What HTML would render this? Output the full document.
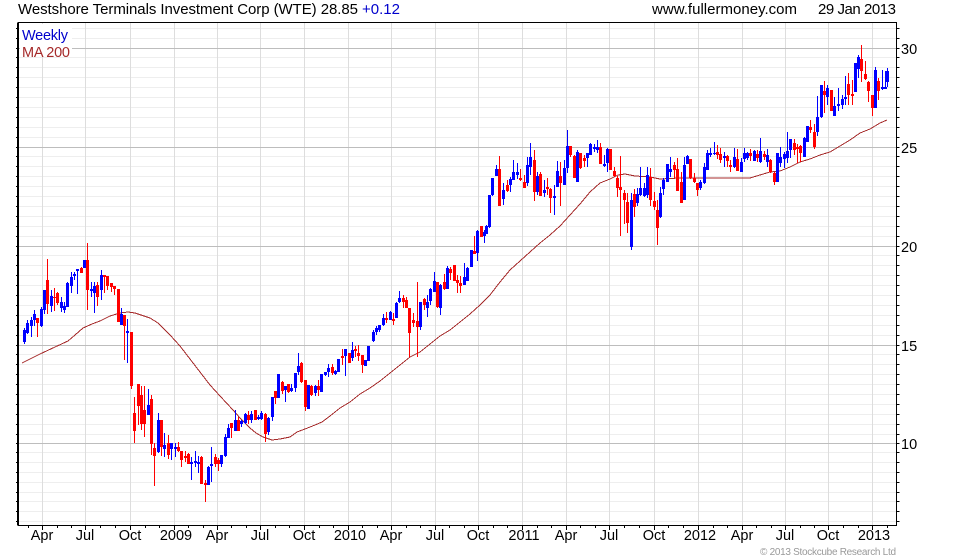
<!DOCTYPE html>
<html>
<head>
<meta charset="utf-8">
<title>WTE Weekly</title>
<style>
html,body{margin:0;padding:0;background:#fff}
svg{display:block}
text{font-family:"Liberation Sans",Arial,sans-serif;font-size:14.5px;fill:#000}
.r{fill:#f00;shape-rendering:crispEdges}
.b{fill:#00f;shape-rendering:crispEdges}
.c{shape-rendering:crispEdges;fill:none}
</style>
</head>
<body>
<svg width="980" height="560" viewBox="0 0 980 560" xmlns="http://www.w3.org/2000/svg">
<defs>
<path id="k" d="M0 28.5h2.5M0 38.5h2.5M0 48.5h2.5M0 57.5h2.5M0 67.5h2.5M0 77.5h2.5M0 87.5h2.5M0 97.5h2.5M0 107.5h2.5M0 117.5h2.5M0 127.5h2.5M0 137.5h2.5M0 147.5h2.5M0 156.5h2.5M0 166.5h2.5M0 176.5h2.5M0 186.5h2.5M0 196.5h2.5M0 206.5h2.5M0 216.5h2.5M0 226.5h2.5M0 236.5h2.5M0 246.5h2.5M0 255.5h2.5M0 265.5h2.5M0 275.5h2.5M0 285.5h2.5M0 295.5h2.5M0 305.5h2.5M0 315.5h2.5M0 325.5h2.5M0 335.5h2.5M0 345.5h2.5M0 354.5h2.5M0 364.5h2.5M0 374.5h2.5M0 384.5h2.5M0 394.5h2.5M0 404.5h2.5M0 414.5h2.5M0 424.5h2.5M0 434.5h2.5M0 443.5h2.5M0 452.5h2.5M0 462.5h2.5M0 472.5h2.5M0 482.5h2.5M0 492.5h2.5M0 501.5h2.5M0 511.5h2.5M0 521.5h2.5" stroke="#000" class="c"/>
</defs>
<!-- minor horizontal grid -->
<path class="c" stroke="#eeeeee" d="M19 28.5H896M19 38.5H896M19 57.5H896M19 67.5H896M19 77.5H896M19 87.5H896M19 97.5H896M19 107.5H896M19 117.5H896M19 127.5H896M19 137.5H896M19 156.5H896M19 166.5H896M19 176.5H896M19 186.5H896M19 196.5H896M19 206.5H896M19 216.5H896M19 226.5H896M19 236.5H896M19 255.5H896M19 265.5H896M19 275.5H896M19 285.5H896M19 295.5H896M19 305.5H896M19 315.5H896M19 325.5H896M19 335.5H896M19 354.5H896M19 364.5H896M19 374.5H896M19 384.5H896M19 394.5H896M19 404.5H896M19 414.5H896M19 424.5H896M19 434.5H896M19 452.5H896M19 462.5H896M19 472.5H896M19 482.5H896M19 492.5H896M19 501.5H896M19 511.5H896M19 521.5H896"/>
<!-- vertical grid -->
<path class="c" stroke="#dddddd" d="M42.5 23V525M85.5 23V525M130.5 23V525M174.5 23V525M217.5 23V525M260.5 23V525M304.5 23V525M348.5 23V525M391.5 23V525M435.5 23V525M478.5 23V525M522.5 23V525M566.5 23V525M609.5 23V525M654.5 23V525M698.5 23V525M742.5 23V525M785.5 23V525M828.5 23V525M872.5 23V525"/>
<!-- major horizontal grid -->
<path class="c" stroke="#bdbdbd" d="M19 48.5H896M19 147.5H896M19 246.5H896M19 345.5H896M19 443.5H896"/>
<!-- legend background -->
<rect x="20" y="24" width="52" height="33" fill="#fff"/>
<!-- moving average -->
<polyline class="c" stroke="#a52a2a" points="22,363 30,359 40,354 55,347 68,341 75,335 83,328 92,324 100,321 110,316 120,313 128,312 135,313 150,318 158,323 165,330 170,335 180,346 190,359 200,372 210,385 220,396 233,410 240,418 250,428 256,433 263,437 272,440 280,439 290,437 297,432 305,429 315,425 322,422 330,416 340,408 350,402 360,394 370,388 380,381 390,373 400,365 410,357 420,352 430,344 440,336 450,330 460,322 470,314 480,305 490,295 500,282 510,270 520,261 530,252 540,243 550,235 560,226 570,215 580,204 590,192 600,183 610,179 618,175 625,174 635,176 650,177 660,179 680,178 700,178 720,178 740,178 750,178 760,175 770,172 780,171 790,167 800,162 810,159 820,155 830,152 840,146 850,140 860,133 870,129 880,123 887,120"/>
<!-- candles -->
<path class="b" d="M23 330h3V342h-3zM24 328h1V344h-1zM26 323h3V333h-3zM27 320h1V334h-1zM30 320h3V326h-3zM31 317h1V337h-1zM33 314h3V320h-3zM34 310h1V326h-1z"/>
<path class="r" d="M36 318h3V323h-3zM37 318h1V337h-1z"/>
<path class="b" d="M40 309h3V326h-3zM41 307h1V327h-1zM43 290h3V310h-3zM44 290h1V314h-1z"/>
<path class="r" d="M46 280h3V304h-3zM47 259h1V314h-1z"/>
<path class="b" d="M50 296h3V306h-3zM51 290h1V312h-1z"/>
<path class="r" d="M53 297h3V298h-3zM54 288h1V311h-1zM56 293h3V303h-3zM57 292h1V305h-1z"/>
<path class="b" d="M60 302h3V308h-3zM61 297h1V312h-1zM63 306h3V310h-3zM64 302h1V313h-1zM66 283h3V307h-3zM67 282h1V307h-1zM70 277h3V286h-3zM71 272h1V293h-1zM73 274h3V276h-3zM74 272h1V280h-1zM76 269h3V271h-3zM77 269h1V294h-1z"/>
<path class="r" d="M80 268h3V273h-3zM81 267h1V273h-1z"/>
<path class="b" d="M83 260h3V268h-3zM84 260h1V268h-1z"/>
<path class="r" d="M86 260h3V290h-3zM87 243h1V310h-1z"/>
<path class="b" d="M90 289h3V291h-3zM91 282h1V297h-1zM93 286h3V293h-3zM94 282h1V313h-1z"/>
<path class="r" d="M96 285h3V297h-3zM97 282h1V306h-1z"/>
<path class="b" d="M100 275h3V290h-3zM101 270h1V300h-1z"/>
<path class="r" d="M103 275h3V277h-3zM104 275h1V293h-1zM106 276h3V286h-3zM107 276h1V290h-1zM110 283h3V287h-3zM111 283h1V292h-1zM113 286h3V289h-3zM114 286h1V295h-1zM117 289h3V322h-3zM118 289h1V322h-1z"/>
<path class="b" d="M120 314h3V325h-3zM121 308h1V325h-1z"/>
<path class="r" d="M123 315h3V326h-3zM124 315h1V360h-1z"/>
<path class="b" d="M126 331h3V333h-3zM127 319h1V363h-1z"/>
<path class="r" d="M130 332h3V386h-3zM131 332h1V389h-1zM133 413h3V431h-3zM134 397h1V443h-1zM137 384h3V406h-3zM138 384h1V425h-1zM140 395h3V424h-3zM141 386h1V430h-1zM143 410h3V424h-3zM144 386h1V437h-1z"/>
<path class="b" d="M147 405h3V415h-3zM148 389h1V415h-1z"/>
<path class="r" d="M150 399h3V444h-3zM151 395h1V455h-1zM153 448h3V456h-3zM154 443h1V486h-1z"/>
<path class="b" d="M157 420h3V452h-3zM158 413h1V453h-1z"/>
<path class="r" d="M160 420h3V447h-3zM161 420h1V456h-1z"/>
<path class="b" d="M163 445h3V449h-3zM164 433h1V457h-1z"/>
<path class="r" d="M167 443h3V455h-3zM168 435h1V459h-1z"/>
<path class="b" d="M170 443h3V449h-3zM171 443h1V460h-1zM174 447h3V449h-3zM175 443h1V457h-1z"/>
<path class="r" d="M177 447h3V451h-3zM178 442h1V452h-1zM180 451h3V460h-3zM181 451h1V467h-1zM184 456h3V458h-3zM185 451h1V462h-1zM187 454h3V464h-3zM188 453h1V464h-1z"/>
<path class="b" d="M190 462h3V464h-3zM191 457h1V480h-1zM194 461h3V463h-3zM195 451h1V467h-1zM197 462h3V464h-3zM198 456h1V473h-1z"/>
<path class="r" d="M200 457h3V484h-3zM201 456h1V484h-1zM204 483h3V485h-3zM205 480h1V502h-1z"/>
<path class="b" d="M207 467h3V485h-3zM208 466h1V485h-1zM210 464h3V466h-3zM211 447h1V482h-1z"/>
<path class="r" d="M214 457h3V464h-3zM215 454h1V467h-1zM217 460h3V464h-3zM218 458h1V471h-1z"/>
<path class="b" d="M220 455h3V464h-3zM221 455h1V467h-1zM224 437h3V456h-3zM225 434h1V457h-1zM227 428h3V438h-3zM228 424h1V438h-1z"/>
<path class="r" d="M230 423h3V428h-3zM231 423h1V438h-1z"/>
<path class="b" d="M234 420h3V431h-3zM235 410h1V431h-1z"/>
<path class="r" d="M237 420h3V431h-3zM238 417h1V431h-1z"/>
<path class="b" d="M240 421h3V424h-3zM241 420h1V427h-1zM244 414h3V423h-3zM245 413h1V424h-1z"/>
<path class="r" d="M247 415h3V420h-3zM248 411h1V424h-1z"/>
<path class="b" d="M250 414h3V420h-3zM251 411h1V423h-1z"/>
<path class="r" d="M254 410h3V420h-3zM255 410h1V420h-1z"/>
<path class="b" d="M257 417h3V419h-3zM258 415h1V420h-1zM260 413h3V419h-3zM261 411h1V420h-1z"/>
<path class="r" d="M264 414h3V434h-3zM265 413h1V442h-1z"/>
<path class="b" d="M267 418h3V432h-3zM268 417h1V435h-1zM271 397h3V417h-3zM272 397h1V421h-1z"/>
<path class="r" d="M274 391h3V398h-3zM275 391h1V404h-1z"/>
<path class="b" d="M277 374h3V398h-3zM278 374h1V398h-1z"/>
<path class="r" d="M281 382h3V391h-3zM282 381h1V394h-1z"/>
<path class="b" d="M284 386h3V390h-3zM285 386h1V402h-1z"/>
<path class="r" d="M287 384h3V392h-3zM288 384h1V393h-1z"/>
<path class="b" d="M290 388h3V391h-3zM291 384h1V392h-1zM294 373h3V388h-3zM295 373h1V392h-1zM297 366h3V372h-3zM298 353h1V375h-1z"/>
<path class="r" d="M300 363h3V382h-3zM301 362h1V383h-1zM304 380h3V407h-3zM305 380h1V411h-1z"/>
<path class="b" d="M307 385h3V409h-3zM308 385h1V409h-1z"/>
<path class="r" d="M310 386h3V395h-3zM311 385h1V396h-1z"/>
<path class="b" d="M314 386h3V393h-3zM315 385h1V396h-1z"/>
<path class="r" d="M317 386h3V390h-3zM318 380h1V396h-1z"/>
<path class="b" d="M320 374h3V392h-3zM321 374h1V392h-1zM324 372h3V375h-3zM325 372h1V376h-1zM327 368h3V372h-3zM328 364h1V377h-1z"/>
<path class="r" d="M331 367h3V373h-3zM332 364h1V375h-1z"/>
<path class="b" d="M334 371h3V374h-3zM335 370h1V375h-1zM337 359h3V372h-3zM338 359h1V372h-1z"/>
<path class="r" d="M341 356h3V358h-3zM342 349h1V365h-1z"/>
<path class="b" d="M344 349h3V356h-3zM345 349h1V376h-1z"/>
<path class="r" d="M348 353h3V363h-3zM349 353h1V363h-1z"/>
<path class="b" d="M351 350h3V358h-3zM352 342h1V361h-1z"/>
<path class="r" d="M354 349h3V351h-3zM355 346h1V357h-1zM357 353h3V356h-3zM358 345h1V361h-1zM361 355h3V365h-3zM362 355h1V373h-1z"/>
<path class="b" d="M364 360h3V366h-3zM365 360h1V366h-1zM367 346h3V361h-3zM368 346h1V361h-1zM372 332h3V341h-3zM373 330h1V342h-1zM375 328h3V332h-3zM376 326h1V335h-1zM378 325h3V330h-3zM379 325h1V332h-1zM382 318h3V325h-3zM383 314h1V326h-1z"/>
<path class="r" d="M385 318h3V320h-3zM386 312h1V323h-1z"/>
<path class="b" d="M389 312h3V320h-3zM390 311h1V320h-1z"/>
<path class="r" d="M392 319h3V321h-3zM393 313h1V325h-1z"/>
<path class="b" d="M395 303h3V318h-3zM396 302h1V318h-1zM398 298h3V302h-3zM399 291h1V303h-1z"/>
<path class="r" d="M402 298h3V302h-3zM403 295h1V308h-1zM405 300h3V308h-3zM406 297h1V308h-1zM408 308h3V333h-3zM409 308h1V357h-1zM412 320h3V323h-3zM413 313h1V327h-1zM416 321h3V327h-3zM417 282h1V357h-1z"/>
<path class="b" d="M419 302h3V327h-3zM420 302h1V330h-1z"/>
<path class="r" d="M423 299h3V305h-3zM424 298h1V310h-1z"/>
<path class="b" d="M426 302h3V308h-3zM427 295h1V317h-1zM429 289h3V301h-3zM430 288h1V305h-1zM433 281h3V292h-3zM434 272h1V292h-1z"/>
<path class="r" d="M436 282h3V307h-3zM437 282h1V308h-1z"/>
<path class="b" d="M439 285h3V308h-3zM440 284h1V315h-1z"/>
<path class="r" d="M443 282h3V289h-3zM444 274h1V290h-1z"/>
<path class="b" d="M446 268h3V289h-3zM447 266h1V289h-1z"/>
<path class="r" d="M449 269h3V273h-3zM450 267h1V280h-1zM453 265h3V281h-3zM454 265h1V281h-1zM456 280h3V283h-3zM457 275h1V293h-1zM459 283h3V286h-3zM460 276h1V293h-1z"/>
<path class="b" d="M463 277h3V285h-3zM464 263h1V285h-1zM466 268h3V281h-3zM467 267h1V281h-1zM470 250h3V267h-3zM471 250h1V267h-1z"/>
<path class="r" d="M473 251h3V254h-3zM474 236h1V254h-1z"/>
<path class="b" d="M476 231h3V253h-3zM477 230h1V261h-1z"/>
<path class="r" d="M480 226h3V237h-3zM481 226h1V237h-1z"/>
<path class="b" d="M483 232h3V236h-3zM484 230h1V243h-1zM485 226h3V234h-3zM486 225h1V234h-1zM488 195h3V227h-3zM489 195h1V228h-1zM491 178h3V195h-3zM492 178h1V196h-1zM495 169h3V176h-3zM496 165h1V176h-1z"/>
<path class="r" d="M498 169h3V206h-3zM499 156h1V206h-1z"/>
<path class="b" d="M502 190h3V199h-3zM503 183h1V205h-1z"/>
<path class="r" d="M506 185h3V191h-3zM507 180h1V192h-1z"/>
<path class="b" d="M509 179h3V185h-3zM510 177h1V192h-1zM512 172h3V180h-3zM513 160h1V180h-1zM516 172h3V175h-3zM517 163h1V179h-1z"/>
<path class="r" d="M519 178h3V180h-3zM520 169h1V181h-1zM523 182h3V188h-3zM524 175h1V188h-1z"/>
<path class="b" d="M526 165h3V183h-3zM527 157h1V186h-1zM529 157h3V167h-3zM530 143h1V175h-1z"/>
<path class="r" d="M533 160h3V192h-3zM534 150h1V201h-1z"/>
<path class="b" d="M536 176h3V192h-3zM537 172h1V195h-1z"/>
<path class="r" d="M539 174h3V196h-3zM540 172h1V196h-1z"/>
<path class="b" d="M543 190h3V193h-3zM544 180h1V197h-1z"/>
<path class="r" d="M546 187h3V189h-3zM547 178h1V195h-1zM549 189h3V198h-3zM550 188h1V213h-1z"/>
<path class="b" d="M553 196h3V198h-3zM554 185h1V215h-1zM556 171h3V187h-3zM557 161h1V187h-1z"/>
<path class="r" d="M559 176h3V183h-3zM560 162h1V206h-1z"/>
<path class="b" d="M563 168h3V185h-3zM564 160h1V185h-1zM566 146h3V168h-3zM567 130h1V173h-1z"/>
<path class="r" d="M569 146h3V155h-3zM570 146h1V157h-1zM573 156h3V178h-3zM574 155h1V178h-1z"/>
<path class="b" d="M576 152h3V182h-3zM577 150h1V182h-1z"/>
<path class="r" d="M579 153h3V168h-3zM580 153h1V169h-1zM583 158h3V161h-3zM584 155h1V167h-1z"/>
<path class="b" d="M586 153h3V158h-3zM587 153h1V167h-1zM589 144h3V155h-3zM590 143h1V155h-1zM593 147h3V149h-3zM594 144h1V152h-1zM596 147h3V150h-3zM597 140h1V153h-1z"/>
<path class="r" d="M599 147h3V164h-3zM600 143h1V164h-1z"/>
<path class="b" d="M603 164h3V166h-3zM604 155h1V167h-1zM606 149h3V163h-3zM607 148h1V172h-1z"/>
<path class="r" d="M609 149h3V170h-3zM610 149h1V170h-1zM613 171h3V176h-3zM614 167h1V177h-1zM616 178h3V188h-3zM617 176h1V197h-1zM619 187h3V190h-3zM620 156h1V236h-1zM623 193h3V200h-3zM624 190h1V224h-1zM626 202h3V223h-3zM627 193h1V233h-1z"/>
<path class="b" d="M630 200h3V247h-3zM631 193h1V250h-1z"/>
<path class="r" d="M633 194h3V207h-3zM634 189h1V217h-1z"/>
<path class="b" d="M636 194h3V203h-3zM637 188h1V206h-1zM639 188h3V195h-3zM640 167h1V196h-1zM643 188h3V196h-3zM644 183h1V197h-1zM646 175h3V195h-3zM647 167h1V198h-1z"/>
<path class="r" d="M649 177h3V200h-3zM650 168h1V206h-1zM653 201h3V207h-3zM654 192h1V210h-1zM656 210h3V228h-3zM657 200h1V245h-1z"/>
<path class="b" d="M659 193h3V217h-3zM660 187h1V218h-1zM662 180h3V189h-3zM663 178h1V195h-1zM666 164h3V182h-3zM667 164h1V182h-1zM669 169h3V172h-3zM670 157h1V177h-1z"/>
<path class="r" d="M673 165h3V170h-3zM674 162h1V178h-1zM676 169h3V191h-3zM677 158h1V191h-1zM680 182h3V203h-3zM681 172h1V203h-1z"/>
<path class="b" d="M683 165h3V200h-3zM684 157h1V200h-1zM686 156h3V164h-3zM687 155h1V164h-1z"/>
<path class="r" d="M689 159h3V178h-3zM690 159h1V179h-1zM693 178h3V182h-3zM694 173h1V183h-1zM696 183h3V190h-3zM697 183h1V196h-1z"/>
<path class="b" d="M699 182h3V188h-3zM700 180h1V190h-1zM703 167h3V183h-3zM704 163h1V184h-1zM706 153h3V170h-3zM707 150h1V170h-1zM709 153h3V155h-3zM710 148h1V157h-1zM713 153h3V154h-3zM714 142h1V155h-1z"/>
<path class="r" d="M716 152h3V155h-3zM717 145h1V159h-1zM719 154h3V160h-3zM720 148h1V163h-1z"/>
<path class="b" d="M723 156h3V158h-3zM724 152h1V167h-1z"/>
<path class="r" d="M726 156h3V161h-3zM727 155h1V167h-1zM729 165h3V167h-3zM730 160h1V172h-1z"/>
<path class="b" d="M733 157h3V167h-3zM734 148h1V168h-1z"/>
<path class="r" d="M736 159h3V171h-3zM737 149h1V171h-1z"/>
<path class="b" d="M740 162h3V172h-3zM741 158h1V172h-1zM743 153h3V159h-3zM744 148h1V162h-1zM746 153h3V158h-3zM747 152h1V160h-1z"/>
<path class="r" d="M749 153h3V156h-3zM750 149h1V161h-1z"/>
<path class="b" d="M753 151h3V161h-3zM754 150h1V161h-1z"/>
<path class="r" d="M756 154h3V158h-3zM757 150h1V162h-1z"/>
<path class="b" d="M759 151h3V162h-3zM760 138h1V163h-1z"/>
<path class="r" d="M763 154h3V157h-3zM764 151h1V160h-1z"/>
<path class="b" d="M766 155h3V162h-3zM767 149h1V167h-1z"/>
<path class="r" d="M769 160h3V172h-3zM770 159h1V173h-1zM773 173h3V182h-3zM774 172h1V185h-1z"/>
<path class="b" d="M776 153h3V182h-3zM777 153h1V182h-1zM779 157h3V163h-3zM780 147h1V167h-1zM783 154h3V159h-3zM784 152h1V168h-1zM786 151h3V158h-3zM787 132h1V163h-1zM789 139h3V150h-3zM790 139h1V158h-1z"/>
<path class="r" d="M793 143h3V150h-3zM794 139h1V155h-1zM796 147h3V149h-3zM797 144h1V163h-1zM799 146h3V153h-3zM800 145h1V162h-1z"/>
<path class="b" d="M803 138h3V157h-3zM804 137h1V157h-1zM806 126h3V142h-3zM807 126h1V142h-1z"/>
<path class="r" d="M809 127h3V130h-3zM810 120h1V133h-1zM813 132h3V147h-3zM814 124h1V149h-1z"/>
<path class="b" d="M816 117h3V132h-3zM817 96h1V136h-1zM820 85h3V117h-3zM821 85h1V118h-1z"/>
<path class="r" d="M823 91h3V95h-3zM824 81h1V113h-1z"/>
<path class="b" d="M826 88h3V97h-3zM827 85h1V105h-1z"/>
<path class="r" d="M830 90h3V111h-3zM831 90h1V111h-1z"/>
<path class="b" d="M833 106h3V116h-3zM834 97h1V116h-1zM837 104h3V106h-3zM838 88h1V111h-1zM841 99h3V105h-3zM842 95h1V109h-1zM844 97h3V99h-3zM845 76h1V105h-1z"/>
<path class="r" d="M847 84h3V95h-3zM848 73h1V105h-1zM851 94h3V96h-3zM852 80h1V105h-1z"/>
<path class="b" d="M854 63h3V92h-3zM855 63h1V92h-1zM857 57h3V69h-3zM858 55h1V78h-1z"/>
<path class="r" d="M860 59h3V71h-3zM861 45h1V82h-1zM864 74h3V79h-3zM865 61h1V80h-1zM867 82h3V91h-3zM868 81h1V102h-1zM871 95h3V108h-3zM872 95h1V116h-1z"/>
<path class="b" d="M874 70h3V108h-3zM875 67h1V108h-1z"/>
<path class="r" d="M877 81h3V91h-3zM878 78h1V100h-1z"/>
<path class="b" d="M881 87h3V89h-3zM882 70h1V90h-1zM884 87h3V89h-3zM885 71h1V89h-1zM886 71h3V82h-3zM887 68h1V87h-1z"/>
<!-- frame -->
<path class="c" stroke="#000" d="M18.5 22.5H896.5V525.5H18.5Z"/>
<path class="c" stroke="#000" d="M17.5 22.5V525.5M19 22.5H896M19 525.5H896"/>
<use href="#k" x="16"/>
<use href="#k" x="897"/>
<!-- bottom ticks -->
<path class="c" stroke="#000" d="M28.5 526v2M42.5 526v4M57.5 526v2M71.5 526v2M85.5 526v4M100.5 526v2M115.5 526v2M130.5 526v4M145.5 526v2M159.5 526v2M174.5 526v4M188.5 526v2M203.5 526v2M217.5 526v4M231.5 526v2M246.5 526v2M260.5 526v4M275.5 526v2M289.5 526v2M304.5 526v4M319.5 526v2M333.5 526v2M348.5 526v4M362.5 526v2M377.5 526v2M391.5 526v4M406.5 526v2M420.5 526v2M435.5 526v4M449.5 526v2M464.5 526v2M478.5 526v4M493.5 526v2M507.5 526v2M522.5 526v4M537.5 526v2M551.5 526v2M566.5 526v4M580.5 526v2M595.5 526v2M609.5 526v4M624.5 526v2M639.5 526v2M654.5 526v4M668.5 526v2M683.5 526v2M698.5 526v4M713.5 526v2M727.5 526v2M742.5 526v4M756.5 526v2M771.5 526v2M785.5 526v4M800.5 526v2M814.5 526v2M828.5 526v4M843.5 526v2M858.5 526v2M872.5 526v4M887.5 526v2"/>
<!-- title -->
<text x="18" y="14" style="font-size:15px" textLength="340" lengthAdjust="spacing">Westshore Terminals Investment Corp (WTE) 28.85</text>
<text x="362" y="14" style="font-size:15px;fill:#0000cc" textLength="38" lengthAdjust="spacing">+0.12</text>
<text x="652" y="14" style="font-size:15px" textLength="145" lengthAdjust="spacing">www.fullermoney.com</text>
<text x="818" y="14" style="font-size:15px" textLength="78" lengthAdjust="spacing">29 Jan 2013</text>
<!-- legend -->
<text x="22" y="40" style="fill:#0000cc" textLength="46" lengthAdjust="spacing">Weekly</text>
<text x="22" y="57" style="fill:#a52a2a" textLength="48" lengthAdjust="spacing">MA 200</text>
<!-- right axis -->
<text x="901" y="54">30</text>
<text x="901" y="153">25</text>
<text x="901" y="252">20</text>
<text x="901" y="351">15</text>
<text x="901" y="449">10</text>
<!-- bottom axis -->
<g text-anchor="middle">
<text x="42" y="540">Apr</text><text x="85" y="540">Jul</text><text x="130" y="540">Oct</text><text x="176" y="540">2009</text><text x="217" y="540">Apr</text><text x="260" y="540">Jul</text><text x="304" y="540">Oct</text><text x="350" y="540">2010</text><text x="391" y="540">Apr</text><text x="435" y="540">Jul</text><text x="478" y="540">Oct</text><text x="524" y="540">2011</text><text x="566" y="540">Apr</text><text x="609" y="540">Jul</text><text x="654" y="540">Oct</text><text x="700" y="540">2012</text><text x="742" y="540">Apr</text><text x="785" y="540">Jul</text><text x="828" y="540">Oct</text><text x="874" y="540">2013</text>
</g>
<text x="760" y="555" style="font-size:10px;fill:#999" textLength="136" lengthAdjust="spacing">© 2013 Stockcube Research Ltd</text>
</svg>
</body>
</html>
